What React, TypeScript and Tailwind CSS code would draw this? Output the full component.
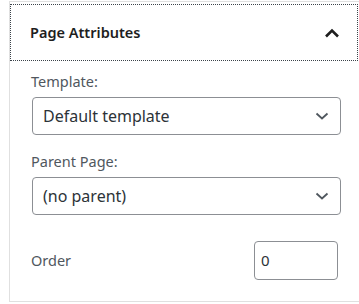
import React from "react";

const font = { fontFamily: '"Noto Sans", "Open Sans", sans-serif' };

function ChevronDown() {
  return (
    <svg width="14" height="8" viewBox="0 0 14 8" className="absolute right-[11px] top-1/2 -translate-y-1/2">
      <path d="M1.5 1.5 L7 6.5 L12.5 1.5" fill="none" stroke="#50575e" strokeWidth="1.8" />
    </svg>
  );
}

function Select({ value }: { value: string }) {
  return (
    <div className="relative ml-[22px] w-[309px] h-[38px] rounded-[4px] border border-[#8c8f94] bg-white flex items-center pl-[10px] text-[16px] text-[#2c3338]">
      <span>{value}</span>
      <ChevronDown />
    </div>
  );
}

export default function App() {
  return (
    <div className="w-[359px] h-[304px] bg-white pt-[1px] pl-[9px]" style={font}>
      <div className="h-[301px] border-l border-t border-b border-[#e0e0e0] flex flex-col">
        <div className="mt-[2px] w-[348px] h-[57px] border border-dotted border-[#3c434a] flex items-center justify-between pl-[19px] pr-[17px]">
          <span className="text-[14.5px] font-semibold text-[#1e1e1e]">Page Attributes</span>
          <svg width="16" height="10" viewBox="0 0 16 10">
            <path d="M2 8.5 L8 2.5 L14 8.5" fill="none" stroke="#1e1e1e" strokeWidth="2.6" />
          </svg>
        </div>
        <div className="flex flex-col">
          <div className="ml-[21px] mt-[8px] text-[14.5px] text-[#50575e] leading-[24px]">Template:</div>
          <div className="mt-[4px]"><Select value="Default template" /></div>
          <div className="ml-[21px] mt-[14px] text-[14.5px] text-[#50575e] leading-[24px]">Parent Page:</div>
          <div className="mt-[4px]"><Select value="(no parent)" /></div>
          <div className="mt-[26px] flex items-center justify-between ml-[21px] w-[307px]">
            <span className="text-[14.5px] text-[#50575e]">Order</span>
            <div className="w-[84px] h-[39px] rounded-[4px] border border-[#8c8f94] flex items-center pl-[6px] text-[15px] text-[#2c3338]">0</div>
          </div>
        </div>
      </div>
    </div>
  );
}
